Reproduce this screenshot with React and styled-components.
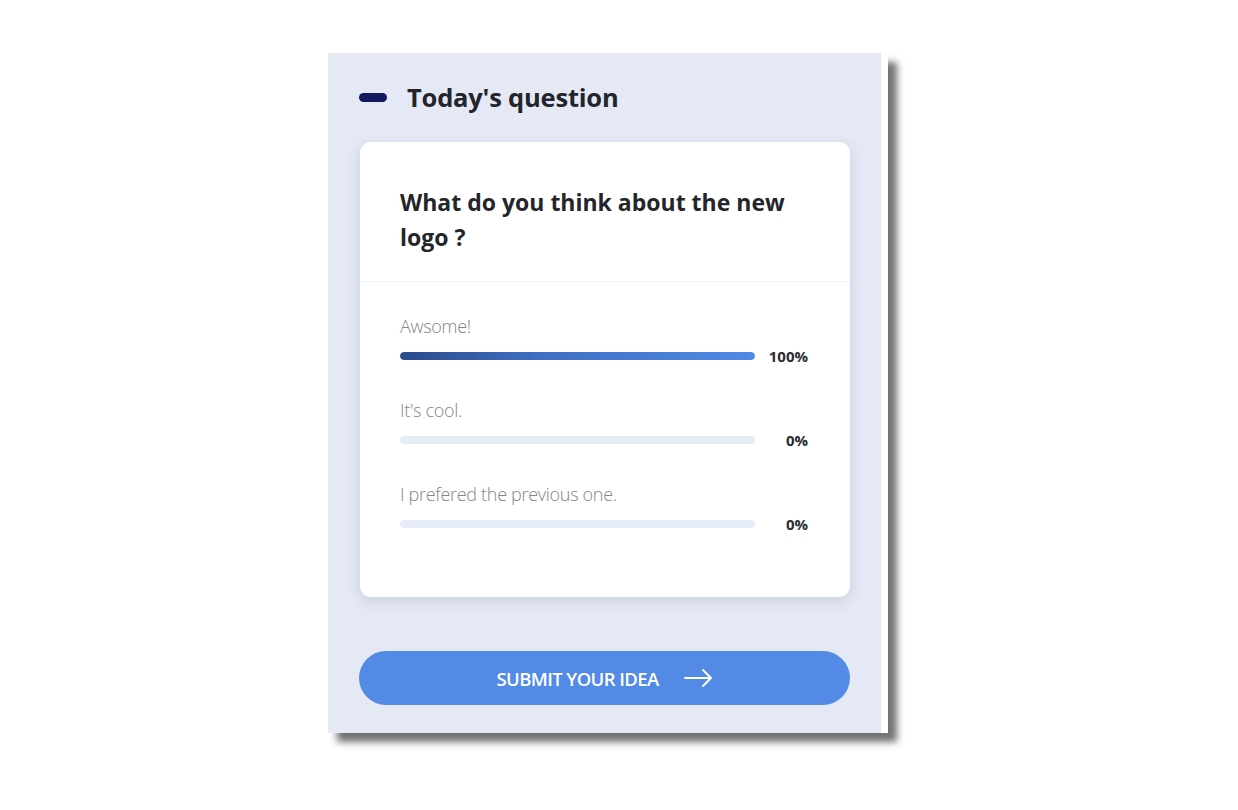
import React from "react";
import styled, { createGlobalStyle } from "styled-components";

const Global = createGlobalStyle`
  html, body { margin: 0; padding: 0; background: #ffffff; }
  body { font-family: "Open Sans", "Noto Sans", sans-serif; }
  * { box-sizing: border-box; }
`;

const Page = styled.div`
  width: 1238px;
  height: 810px;
  padding: 53px 0 0 328px;
`;

const Panel = styled.section`
  width: 560px;
  height: 680px;
  background: #e5e9f5;
  border-right: 7px solid #ffffff;
  box-shadow: 9px 9px 7px rgba(0, 0, 0, 0.55);
  padding: 22px 31px 0 31px;
  display: flex;
  flex-direction: column;
`;

const Header = styled.header`
  height: 44px;
  display: flex;
  align-items: center;
  gap: 20px;
`;

const Bullet = styled.span`
  width: 28px;
  height: 9px;
  border-radius: 5px;
  background: #111a5e;
  flex: none;
`;

const Title = styled.h2`
  margin: 0;
  font-size: 25.5px;
  font-weight: 700;
  color: #24252b;
  letter-spacing: -0.2px;
`;

const Card = styled.div`
  margin-top: 23px;
  margin-left: 1px;
  width: 490px;
  height: 455px;
  background: #ffffff;
  border-radius: 11px;
  box-shadow: 0 4px 14px rgba(60, 70, 110, 0.16);
  display: flex;
  flex-direction: column;
`;

const QuestionBox = styled.div`
  height: 140px;
  padding: 43px 40px 0 40px;
  border-bottom: 1px solid #eef1f7;
`;

const Question = styled.h3`
  margin: 0;
  max-width: 400px;
  font-size: 23px;
  line-height: 35px;
  font-weight: 700;
  color: #24252b;
  letter-spacing: 0px;
`;

const Options = styled.div`
  padding: 34px 42px 0 40px;
  display: flex;
  flex-direction: column;
  gap: 36px;
`;

const Option = styled.div`
  display: flex;
  flex-direction: column;
  gap: 12px;
`;

const Label = styled.div`
  font-size: 18px;
  line-height: 20px;
  font-weight: 300;
  color: #84858b;
  letter-spacing: -0.3px;
`;

const BarRow = styled.div`
  height: 16px;
  display: flex;
  align-items: center;
`;

const Track = styled.div`
  width: 355px;
  height: 8px;
  border-radius: 4px;
  background: #e7edf8;
  overflow: hidden;
  flex: none;
`;

const Fill = styled.div`
  height: 100%;
  border-radius: 4px;
  background: linear-gradient(90deg, #2c4a8a 0%, #3f6fc4 40%, #4f8ae6 100%);
`;

const Percent = styled.span`
  flex: 1;
  text-align: right;
  font-size: 15px;
  font-weight: 700;
  color: #2a2b30;
  letter-spacing: 0px;
`;

const SubmitButton = styled.button`
  margin-top: 54px;
  width: 491px;
  height: 54px;
  border: none;
  border-radius: 27px;
  background: #528ae6;
  color: #ffffff;
  display: flex;
  align-items: center;
  justify-content: center;
  gap: 25px;
  font-family: "Open Sans", "Noto Sans", sans-serif;
  font-size: 18.5px;
  font-weight: 600;
  letter-spacing: -0.6px;
  cursor: pointer;
`;

const Arrow = () => (
  <svg width="29" height="20" viewBox="0 0 29 20" fill="none">
    <path d="M1 10 H27 M19 2 L27 10 L19 18" stroke="#ffffff" strokeWidth="2" strokeLinecap="round" strokeLinejoin="round" />
  </svg>
);

const options = [
  { label: "Awsome!", value: 100 },
  { label: "It's cool.", value: 0 },
  { label: "I prefered the previous one.", value: 0 },
];

export default function App() {
  return (
    <Page>
      <Global />
      <Panel>
        <Header>
          <Bullet />
          <Title>Today's question</Title>
        </Header>
        <Card>
          <QuestionBox>
            <Question>What do you think about the new logo ?</Question>
          </QuestionBox>
          <Options>
            {options.map((o) => (
              <Option key={o.label}>
                <Label>{o.label}</Label>
                <BarRow>
                  <Track>
                    {o.value > 0 && <Fill style={{ width: `${o.value}%` }} />}
                  </Track>
                  <Percent>{o.value}%</Percent>
                </BarRow>
              </Option>
            ))}
          </Options>
        </Card>
        <SubmitButton>
          SUBMIT YOUR IDEA
          <Arrow />
        </SubmitButton>
      </Panel>
    </Page>
  );
}
